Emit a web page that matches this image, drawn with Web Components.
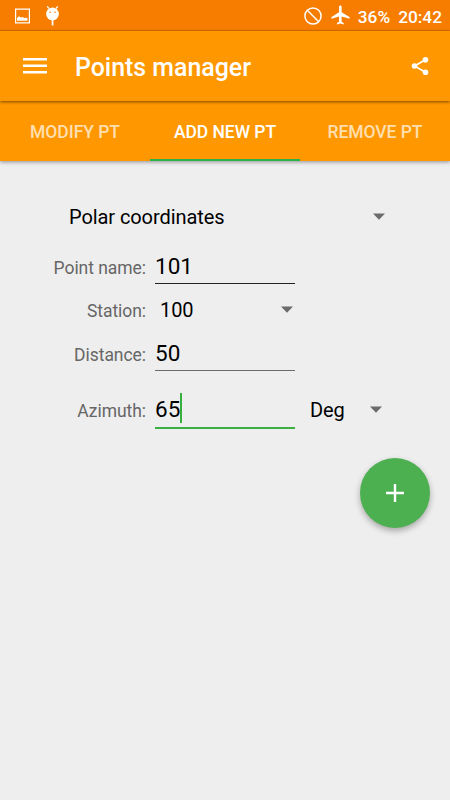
<!DOCTYPE html>
<html lang="en">
<head>
<meta charset="utf-8">
<title>Points manager</title>
<style>
  html, body {
    margin: 0;
    padding: 0;
    height: 100%;
    background-color: #eeeeee;
    font-family: Roboto, sans-serif;
  }
</style>
</head>
<body>
<points-app></points-app>

<script>
function makeTemplate(html) {
  const template = document.createElement('template');
  template.innerHTML = html;
  return template;
}

class BaseElement extends HTMLElement {
  constructor() {
    super();
    this.attachShadow({mode: 'open'});
    this.shadowRoot.appendChild(this.constructor.template.content.cloneNode(true));
  }
}

// Android status bar
class StatusBar extends BaseElement {}
StatusBar.template = makeTemplate(`
  <style>
    :host {
      display: flex;
      align-items: center;
      box-sizing: border-box;
      height: 31px;
      padding: 0 8px 0 14px;
      background-color: #f77d00;
      border-bottom: 1px solid #df6f00;
      color: #fff;
      font-size: 17.3px;
      font-weight: 500;
      line-height: 30px;
    }
    svg { display: block; fill: #fff; }
    .picture { margin-top: 1px; }
    .bot { margin: 2px 0 0 15px; }
    .block { margin: 1px 0 0 auto; }
    .plane { margin-left: 9px; }
    .battery { margin-left: 8px; padding-top: 3px; }
    .time { margin-left: 8px; padding-top: 3px; }
  </style>
  <svg class="picture" width="16" height="16" viewBox="0 0 16 16">
    <path fill-rule="evenodd" d="M1 .5h15v15H1zM2.2 1.7v12.6h12.6V1.7z"/>
    <path d="M3 12.8V10l2-1.8 1.8 1.3 2-.5 1.7 1.2 1.2-.6 1.8 1v2.2z"/>
  </svg>
  <svg class="bot" width="15" height="20" viewBox="0 0 15 20">
    <path d="M2.2.3 4 2.5M12.8.3 11 2.5" stroke="#fff" stroke-width="1.2"/>
    <ellipse cx="7.5" cy="8" rx="6.4" ry="6.5"/>
    <circle cx="5" cy="6.3" r=".8" fill="#f77d00"/>
    <circle cx="10" cy="6.3" r=".8" fill="#f77d00"/>
    <path d="M6.7 14h1.7v5.5H6.7z"/>
  </svg>
  <svg class="block" width="18" height="18" viewBox="0 0 18 18">
    <circle cx="9" cy="9" r="8.1" fill="none" stroke="#fff" stroke-width="1.5"/>
    <path d="M3.3 3.3 14.7 14.7" stroke="#fff" stroke-width="1.5"/>
  </svg>
  <svg class="plane" width="19" height="20" viewBox="2 2 20 20">
    <path d="M21.5 16v-2l-8.3-5V3.5c0-.83-.5-1.5-1.3-1.5s-1.4.67-1.4 1.5V9l-8 5v2l8-2.5V19l-2.2 1.5V22l3.6-1 3.5 1v-1.5L13.2 19v-5.5z"/>
  </svg>
  <span class="battery">36%</span>
  <span class="time">20:42</span>
`);
customElements.define('status-bar', StatusBar);

// Toolbar, title goes in the slot
class AppToolbar extends BaseElement {}
AppToolbar.template = makeTemplate(`
  <style>
    :host {
      display: flex;
      align-items: center;
      position: relative;
      z-index: 1;
      box-sizing: border-box;
      height: 70px;
      padding: 0 20px 0 23px;
      background-color: #ff9800;
      box-shadow: 0 1px 3px rgba(0,0,0,0.5);
      color: #fff;
    }
    svg { display: block; }
    .title {
      flex: 1;
      margin-left: 28px;
      padding-top: 4px;
      font-size: 24.9px;
      font-weight: 500;
      line-height: 30px;
    }
  </style>
  <svg width="24" height="16" viewBox="0 0 24 16">
    <path fill="#fff" d="M0 0h24v2.5H0zM0 6.5h24V9H0zM0 13h24v2.5H0z"/>
  </svg>
  <div class="title"><slot></slot></div>
  <svg width="19" height="20" viewBox="0 0 19 20">
    <path d="M14.5 3.8 3.5 10l11 6.2" fill="none" stroke="#fff" stroke-width="1.8"/>
    <g fill="#fff">
      <circle cx="14.5" cy="3.8" r="2.8"/>
      <circle cx="3.5" cy="10" r="2.8"/>
      <circle cx="14.5" cy="16.3" r="2.8"/>
    </g>
  </svg>
`);
customElements.define('app-toolbar', AppToolbar);

class TabBar extends BaseElement {}
TabBar.template = makeTemplate(`
  <style>
    :host {
      display: grid;
      grid-template-columns: repeat(3, 1fr);
      grid-template-rows: 60px;
      height: 60px;
      background-color: #ff9800;
      box-shadow: 0 1px 4px rgba(0,0,0,0.4);
    }
  </style>
  <slot></slot>
`);
customElements.define('tab-bar', TabBar);

class TabItem extends BaseElement {}
TabItem.template = makeTemplate(`
  <style>
    :host {
      display: block;
      box-sizing: border-box;
      padding-top: 2px;
      border-bottom: 2px solid transparent;
      color: rgba(255,255,255,0.7);
      font-size: 17.5px;
      font-weight: 500;
      letter-spacing: -0.05px;
      line-height: 58px;
      text-align: center;
      white-space: nowrap;
    }
    :host([selected]) {
      color: #fff;
      border-bottom-color: #2bb04a;
    }
  </style>
  <slot></slot>
`);
customElements.define('tab-item', TabItem);

// Label on the left, control in the slot
class FormRow extends BaseElement {
  connectedCallback() {
    this.shadowRoot.querySelector('.label').textContent = this.getAttribute('label');
  }
}
FormRow.template = makeTemplate(`
  <style>
    :host {
      display: flex;
      align-items: baseline;
    }
    .label {
      width: 146px;
      margin-right: 9px;
      color: #666;
      font-size: 17.5px;
      letter-spacing: -0.05px;
      line-height: 24px;
      text-align: right;
    }
  </style>
  <div class="label"></div>
  <slot></slot>
`);
customElements.define('form-row', FormRow);

class TextField extends BaseElement {}
TextField.template = makeTemplate(`
  <style>
    :host {
      display: flex;
      box-sizing: border-box;
      width: 140px;
      height: 35px;
      border-bottom: 1px solid var(--line-color, #222);
      color: #000;
      font-size: 22.5px;
      line-height: 34px;
    }
    .caret {
      display: none;
      width: 2px;
      height: 30px;
      margin-top: 1px;
      background-color: #36b03c;
    }
    :host([focused]) {
      height: 37px;
      border-bottom: 2px solid #3cb043;
    }
    :host([focused]) .caret { display: block; }
  </style>
  <slot></slot><div class="caret"></div>
`);
customElements.define('text-field', TextField);

class DropDown extends BaseElement {}
DropDown.template = makeTemplate(`
  <style>
    :host {
      display: flex;
      align-items: center;
      justify-content: space-between;
      color: #000;
      font-size: 20px;
      letter-spacing: -0.08px;
      line-height: 24px;
    }
    svg { display: block; margin-top: -2px; }
  </style>
  <span><slot></slot></span>
  <svg width="12" height="7" viewBox="0 0 12 7"><path fill="#6b6b6b" d="M0 .5h12L6 6.8z"/></svg>
`);
customElements.define('drop-down', DropDown);

class AddButton extends BaseElement {}
AddButton.template = makeTemplate(`
  <style>
    :host {
      display: flex;
      align-items: center;
      justify-content: center;
      width: 70px;
      height: 70px;
      border-radius: 50%;
      background-color: #4caf50;
      box-shadow: 0 3px 6px rgba(0,0,0,0.3);
    }
  </style>
  <svg width="18" height="18" viewBox="0 0 18 18">
    <path fill="#fff" d="M7.8 0h2.4v7.8H18v2.4h-7.8V18H7.8v-7.8H0V7.8h7.8z"/>
  </svg>
`);
customElements.define('add-button', AddButton);

class PointsApp extends BaseElement {}
PointsApp.template = makeTemplate(`
  <style>
    :host {
      display: block;
      height: 100%;
      overflow: hidden;
    }
    main {
      display: flex;
      flex-direction: column;
    }
    .type { margin: 44px 65px 0 69px; }
    .name { margin-top: 20px; --line-color: #222; }
    .station { margin-top: 14px; }
    .station drop-down { width: 133px; margin-left: 5px; }
    .distance { margin-top: 13px; --line-color: #6b6b6b; }
    .azimuth { margin-top: 21px; }
    .azimuth drop-down { width: 72px; margin-left: 15px; }
    add-button {
      align-self: flex-end;
      margin: 28.5px 20px 0 0;
    }
  </style>
  <status-bar></status-bar>
  <app-toolbar>Points manager</app-toolbar>
  <tab-bar>
    <tab-item>MODIFY PT</tab-item>
    <tab-item selected>ADD NEW PT</tab-item>
    <tab-item>REMOVE PT</tab-item>
  </tab-bar>
  <main>
    <drop-down class="type">Polar coordinates</drop-down>
    <form-row class="name" label="Point name:"><text-field>101</text-field></form-row>
    <form-row class="station" label="Station:"><drop-down>100</drop-down></form-row>
    <form-row class="distance" label="Distance:"><text-field>50</text-field></form-row>
    <form-row class="azimuth" label="Azimuth:">
      <text-field focused>65</text-field>
      <drop-down>Deg</drop-down>
    </form-row>
    <add-button></add-button>
  </main>
`);
customElements.define('points-app', PointsApp);
</script>
</body>
</html>
